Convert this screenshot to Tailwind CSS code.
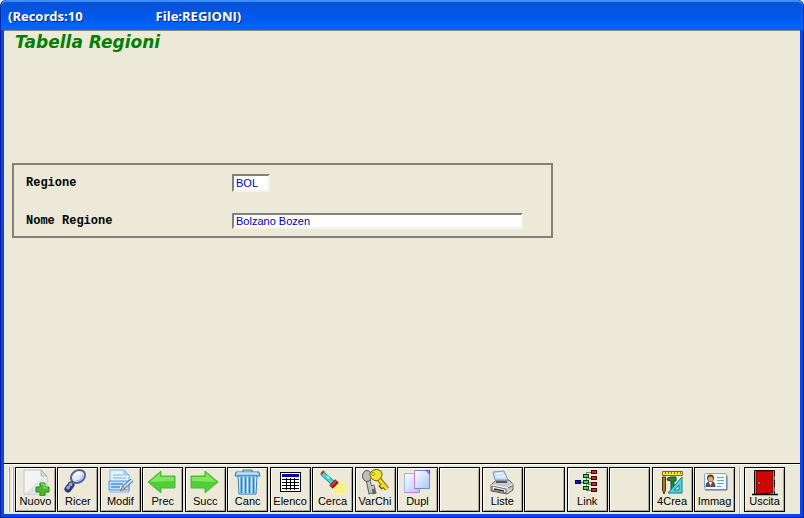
<!DOCTYPE html>
<html lang="it" class="bg-[#eef0f8]">
  <head>
    <meta charset="UTF-8" />
    <meta name="viewport" content="width=device-width, initial-scale=1.0" />
    <title>Tabella Regioni</title>
    <script src="https://cdn.jsdelivr.net/npm/@tailwindcss/browser@4"></script>
  </head>
  <body class="h-screen flex flex-col overflow-hidden font-['Liberation_Sans',sans-serif] text-black">
    <!-- Barra del titolo -->
    <header class="h-[30px] shrink-0 flex items-center gap-[73px] pl-[7px] pt-1 rounded-t-md border-x border-[#0028a8] bg-linear-to-b from-[#0a4fd0] via-[#0058ea] to-[#0066ff] font-['Open_Sans',sans-serif] text-[13px] font-bold text-white [text-shadow:1px_1px_#0a2a80] shadow-[inset_0_2px_1px_#3d8dfa]">
      <span>(Records:10</span>
      <span>File:REGIONI)</span>
    </header>

    <div class="grow flex flex-col border-x border-b border-[#001ea0]">
      <div class="grow flex flex-col border-x-3 border-b-3 border-[#0a46e4] bg-[#ece9d8]">
        <!-- Scheda -->
        <main class="grow border-t border-[#8c8a80] px-2">
          <h1 class="pl-[3px] text-[17px] leading-[22px] font-bold italic text-[#008000] font-['DejaVu_Sans',sans-serif]">Tabella Regioni</h1>

          <form class="mt-[110px] max-w-[541px] h-[75px] border-2 border-[#848278] pl-3 pr-7 pt-[9px] flex flex-col gap-5 font-['Liberation_Mono',monospace] text-[12px]">
            <div class="flex items-center h-[18px]">
              <label for="codice" class="w-[206px] font-bold">Regione</label>
              <input id="codice" type="text" value="BOL" class="w-[38px] h-[18px] bg-white border-2 border-t-[#848278] border-l-[#848278] border-r-[#f6f4ea] border-b-[#f6f4ea] pl-0.5 font-['Liberation_Sans',sans-serif] text-[11px] text-[#0000b0]" />
            </div>
            <div class="flex items-center h-[18px]">
              <label for="nome" class="w-[206px] font-bold">Nome Regione</label>
              <input id="nome" type="text" value="Bolzano Bozen" class="grow h-4 bg-white border-2 border-t-[#848278] border-l-[#848278] border-r-[#f6f4ea] border-b-[#f6f4ea] pl-0.5 font-['Liberation_Sans',sans-serif] text-[11px] text-[#0000b0]" />
            </div>
          </form>
        </main>

        <!-- Barra dei comandi -->
        <footer class="h-[51px] shrink-0 flex items-start border-t border-black pl-1 pt-[3px] text-[11px] leading-3 shadow-[inset_0_1px_#ffffff] [&_button_span]:-mt-px">
          <div class="w-[7px] h-[45px] flex gap-0.5">
            <span class="w-0.5 border-l border-r border-l-white border-r-[#aca899]"></span>
            <span class="w-0.5 border-l border-r border-l-white border-r-[#aca899]"></span>
          </div>

          <div class="w-[720px] flex justify-between">
            <button type="button" class="w-[41px] h-[45px] flex flex-col items-center border border-black shadow-[inset_1px_1px_#ffffff,inset_-1px_-1px_#aca899]">
              <svg class="w-[39px] h-7 shrink-0" viewBox="0 0 39 28">
                <path d="M8 2h17l6 6v18H8z" fill="#f3f5f5" stroke="#b4bcbc" stroke-width=".8" />
                <path d="M10 25L28 8v17z" fill="#dfe5e4" />
                <path d="M25 2v6h6z" fill="#d4dada" stroke="#999" stroke-width=".6" />
                <path d="M24 15h5v4h4v5h-4v4h-5v-4h-4v-5h4z" fill="#4fb52c" stroke="#2c8c1b" />
                <path d="M25 16h3v4h4" fill="none" stroke="#9be070" />
              </svg>
              <span>Nuovo</span>
            </button>
            <button type="button" class="w-[41px] h-[45px] flex flex-col items-center border border-black shadow-[inset_1px_1px_#ffffff,inset_-1px_-1px_#aca899]">
              <svg class="w-[39px] h-7 shrink-0" viewBox="0 0 39 28">
                <path d="M17 13l-4 4" stroke="#7078a8" stroke-width="3" />
                <path d="M13 17l-3 4" stroke="#343a78" stroke-width="7" stroke-linecap="round" />
                <path d="M13 16l-4 5" stroke="#9fabe4" stroke-width="3" stroke-linecap="round" stroke-dasharray="1 3" />
                <ellipse cx="20" cy="8.500" rx="7.500" ry="6" transform="rotate(-35 20 8.500)" fill="#dfe9fa" stroke="#5a609c" stroke-width="2" />
                <path d="M16 9q1-4 6-4" fill="none" stroke="#fff" stroke-width="2" />
                <path d="M18 13q6 0 7-6" fill="none" stroke="#9db8e8" stroke-width="1.5" />
              </svg>
              <span>Ricer</span>
            </button>
            <button type="button" class="w-[41px] h-[45px] flex flex-col items-center border border-black shadow-[inset_1px_1px_#ffffff,inset_-1px_-1px_#aca899]">
              <svg class="w-[39px] h-7 shrink-0" viewBox="0 0 39 28">
                <path d="M9 2h14l5 5v17H9z" fill="#e8f3ff" stroke="#79b2ec" />
                <path d="M23 2v5h5z" fill="#b5d8fa" stroke="#79b2ec" stroke-width=".7" />
                <path d="M12 7h10M12 10h13M12 15h13M12 18h10" stroke="#72aee8" />
                <path d="M8 13h20v9H8z" fill="#c3dffb" stroke="#4c92dc" />
                <path d="M10 16h12M10 19h9" stroke="#4a92df" stroke-width="1.5" />
                <path d="M31 12l-9 8" stroke="#4e78ac" stroke-width="4" />
                <path d="M31 12l-9 8" stroke="#d3e7fb" stroke-width="2" />
                <path d="M22 18l2 3-5 2z" fill="#e7b477" stroke="#456" stroke-width=".5" />
              </svg>
              <span>Modif</span>
            </button>
            <button type="button" class="w-[41px] h-[45px] flex flex-col items-center border border-black shadow-[inset_1px_1px_#ffffff,inset_-1px_-1px_#aca899]">
              <svg class="w-[39px] h-7 shrink-0" viewBox="0 0 39 28">
                <path d="M5 14L18 3v5h14v12H18v5z" fill="#4fce36" stroke="#4bb83c" stroke-linejoin="round" />
                <path d="M7 14L17 5v4h14v4z" fill="#7fe65e" />
              </svg>
              <span>Prec</span>
            </button>
            <button type="button" class="w-[41px] h-[45px] flex flex-col items-center border border-black shadow-[inset_1px_1px_#ffffff,inset_-1px_-1px_#aca899]">
              <svg class="w-[39px] h-7 shrink-0" viewBox="0 0 39 28">
                <path d="M32 14L19 3v5H5v12h14v5z" fill="#4fce36" stroke="#4bb83c" stroke-linejoin="round" />
                <path d="M30 14L20 5v4H6v4z" fill="#7fe65e" />
              </svg>
              <span>Succ</span>
            </button>
            <button type="button" class="w-[41px] h-[45px] flex flex-col items-center border border-black shadow-[inset_1px_1px_#ffffff,inset_-1px_-1px_#aca899]">
              <svg class="w-[39px] h-7 shrink-0" viewBox="0 0 39 28">
                <path d="M15 4V2h9v2" fill="none" stroke="#2c6ea4" />
                <path d="M8 4h23l1 4H7z" fill="#9ed0f0" stroke="#2f7fbd" />
                <path d="M10 8h19l-1 18H11z" fill="#d8effc" stroke="#2f7fbd" />
                <path d="M13.500 9v16M17.500 9v16M21.500 9v16M25.500 9v16" stroke="#2784cc" stroke-width="2" />
                <path d="M9 5h20" stroke="#e8f6ff" />
              </svg>
              <span>Canc</span>
            </button>
            <button type="button" class="w-[41px] h-[45px] flex flex-col items-center border border-black shadow-[inset_1px_1px_#ffffff,inset_-1px_-1px_#aca899]">
              <svg class="w-[39px] h-7 shrink-0" viewBox="0 0 39 28" shape-rendering="crispEdges">
                <path d="M9 4h21v20H9z" fill="#000" />
                <path d="M10 5h19v18H10z" fill="#fff" />
                <path d="M11 6h17v3H11z" fill="#0000b8" />
                <path d="M11 11.500h17M11 14.500h17M11 17.500h17M11 20.500h17M15.500 10v12M19.500 10v12M23.500 10v12" stroke="#000" />
              </svg>
              <span>Elenco</span>
            </button>
            <button type="button" class="w-[41px] h-[45px] flex flex-col items-center border border-black shadow-[inset_1px_1px_#ffffff,inset_-1px_-1px_#aca899]">
              <svg class="w-[39px] h-7 shrink-0" viewBox="0 0 39 28">
                <path d="M23 14h9v12H20v-8z" fill="#fff38a" />
                <path d="M22 17h10M22 20h10M22 23h10" stroke="#ffe23c" stroke-dasharray="1 1" />
                <path d="M9 5l11 10" stroke="#237d85" stroke-width="5" />
                <path d="M9 5l11 10" stroke="#38dce4" stroke-width="3.500" />
                <path d="M8 6l3-3" stroke="#d02020" stroke-width="2" />
                <path d="M18 19l6-6" stroke="#8e1717" stroke-width="5" />
                <path d="M18 18l5-5" stroke="#e33" stroke-width="2" />
                <path d="M14 8l2 2" stroke="#fff" stroke-width="1.500" />
              </svg>
              <span>Cerca</span>
            </button>
            <button type="button" class="w-[41px] h-[45px] flex flex-col items-center border border-black shadow-[inset_1px_1px_#ffffff,inset_-1px_-1px_#aca899]">
              <svg class="w-[39px] h-7 shrink-0" viewBox="0 0 39 28">
                <path d="M12 11l3 15M15 20l4-1M16 24l4-1" stroke="#666" stroke-width="5" />
                <path d="M12 11l3 14M15 20l3-1" stroke="#c4c4c4" stroke-width="3" />
                <ellipse cx="11" cy="8" rx="4.500" ry="5.500" fill="#bdbdbd" stroke="#555" />
                <path d="M22 10l9 11M27 17l-3 3" stroke="#706000" stroke-width="5" />
                <path d="M22 10l9 11M27 17l-2 2" stroke="#f4dd20" stroke-width="3" />
                <path d="M14 5q4-5 9-3 5 2 2 8-4 5-9 1-3-3-2-6z" fill="#f5e331" stroke="#706000" />
                <circle cx="17" cy="6" r="1.500" fill="#fff" stroke="#706000" stroke-width=".7" />
              </svg>
              <span>VarChi</span>
            </button>
            <button type="button" class="w-[41px] h-[45px] flex flex-col items-center border border-black shadow-[inset_1px_1px_#ffffff,inset_-1px_-1px_#aca899]">
              <svg class="w-[39px] h-7 shrink-0" viewBox="0 0 39 28">
                <defs>
                  <linearGradient id="foglio" x1="0" y1="0" x2="1" y2="1">
                    <stop offset="0" stop-color="#ffffff" />
                    <stop offset="1" stop-color="#a5c8ff" />
                  </linearGradient>
                </defs>
                <path d="M6.500 5.500h15v19h-15z" fill="url(#foglio)" stroke="#d678d0" />
                <path d="M6.500 24V5.500H20" fill="none" stroke="#a8b4ea" />
                <path d="M16.500 2.500h15v18h-15z" fill="url(#foglio)" stroke="#7089dc" />
                <path d="M16.500 20.500V3" stroke="#d678d0" />
                <path d="M27 2h5v5z" fill="#7045c0" />
                <path d="M29 3h2v2z" fill="#f080d0" />
              </svg>
              <span>Dupl</span>
            </button>
            <button type="button" aria-label="Libero" class="w-[41px] h-[45px] border border-black shadow-[inset_1px_1px_#ffffff,inset_-1px_-1px_#aca899]"></button>
            <button type="button" class="w-[41px] h-[45px] flex flex-col items-center border border-black shadow-[inset_1px_1px_#ffffff,inset_-1px_-1px_#aca899]">
              <svg class="w-[39px] h-7 shrink-0" viewBox="0 0 39 28">
                <path d="M8 17l5-5h13l4 4v6l-6 4-16-3z" fill="#c9c9c5" stroke="#62625e" />
                <path d="M12 12l-2-8 11-1 4 9z" fill="#c8e3ff" stroke="#6d9ad0" />
                <path d="M13 6l7-1M14 9l8-1" stroke="#fff" />
                <path d="M8 17l16 3 6-4" fill="none" stroke="#fff" />
                <path d="M9 18l14 3v4L9 22z" fill="#eeeeea" stroke="#555" stroke-width=".8" />
                <path d="M11 21l10 2M13 14h11" stroke="#333" stroke-width="1.500" />
                <path d="M25 20l4-2" stroke="#666" />
              </svg>
              <span>Liste</span>
            </button>
            <button type="button" aria-label="Libero" class="w-[41px] h-[45px] border border-black shadow-[inset_1px_1px_#ffffff,inset_-1px_-1px_#aca899]"></button>
            <button type="button" class="w-[41px] h-[45px] flex flex-col items-center border border-black shadow-[inset_1px_1px_#ffffff,inset_-1px_-1px_#aca899]">
              <svg class="w-[39px] h-7 shrink-0" viewBox="0 0 39 28" shape-rendering="crispEdges">
                <path d="M12 14.500h12M18.500 4v19M18 4.500h6M18 22.500h6M20 10.500h4M20 16.500h4" fill="none" stroke="#777f68" />
                <path d="M7 12h6v4H7z" fill="#000060" />
                <path d="M8 13h3v2H8z" fill="#1020c0" />
                <path d="M15 6h6v4h-6zM15 12h6v4h-6zM15 18h6v4h-6z" fill="#063d12" />
                <path d="M16 7h4v2h-4zM16 13h4v2h-4zM16 19h4v2h-4z" fill="#42d45b" />
                <path d="M23 2h6v4h-6zM23 8h6v4h-6zM23 14h6v4h-6zM23 20h6v4h-6z" fill="#3d0808" />
                <path d="M24 3h4v2h-4zM24 9h4v2h-4zM24 15h4v2h-4zM24 21h4v2h-4z" fill="#c52c2c" />
              </svg>
              <span>Link</span>
            </button>
            <button type="button" aria-label="Libero" class="w-[41px] h-[45px] border border-black shadow-[inset_1px_1px_#ffffff,inset_-1px_-1px_#aca899]"></button>
            <button type="button" class="w-[41px] h-[45px] flex flex-col items-center border border-black shadow-[inset_1px_1px_#ffffff,inset_-1px_-1px_#aca899]">
              <svg class="w-[39px] h-7 shrink-0" viewBox="0 0 39 28">
                <path d="M9.500 3.500h20v4h-20z" fill="#ffe83a" stroke="#7d6b00" />
                <path d="M12.500 4v2M15.500 4v2M18.500 4v2M21.500 4v2M24.500 4v2M27.500 4v2" stroke="#7d6b00" />
                <path d="M9.500 9h3v13l-1.500 4-1.500-4z" fill="#a87828" stroke="#4b3510" />
                <path d="M14 12q0-3 4-3h5v4h-2v11h-3V13z" fill="#1e8a35" stroke="#0b4d1c" />
                <path d="M29 9v16H15z" fill="#46d9df" stroke="#147b8a" stroke-linejoin="round" />
                <path d="M26 17v5h-5z" fill="#ece9d8" stroke="#147b8a" />
              </svg>
              <span>4Crea</span>
            </button>
            <button type="button" class="w-[41px] h-[45px] flex flex-col items-center border border-black shadow-[inset_1px_1px_#ffffff,inset_-1px_-1px_#aca899]">
              <svg class="w-[39px] h-7 shrink-0" viewBox="0 0 39 28">
                <rect x="9.500" y="5.500" width="22" height="16" rx="1" fill="#f4f9ff" stroke="#7fa4d8" />
                <path d="M10 22h22V8" fill="none" stroke="#5273a8" />
                <path d="M10.500 19q0-6 5-6t5 6z" fill="#5a4c48" />
                <circle cx="15.500" cy="10" r="3.500" fill="#5b3824" />
                <circle cx="15.500" cy="11" r="2.500" fill="#eda36d" />
                <path d="M14 14h3l-1.500 4z" fill="#fff" />
                <path d="M22 9.500h7M22 12.500h7M22 15.500h7M22 18.500h4" stroke="#6f9be0" />
              </svg>
              <span>Immag</span>
            </button>
          </div>

          <span class="ml-1 mr-[3px] w-0.5 h-[47px] border-l border-r border-l-[#aca899] border-r-white"></span>

          <button type="button" class="w-[41px] h-[45px] flex flex-col items-center border border-black shadow-[inset_1px_1px_#ffffff,inset_-1px_-1px_#aca899]">
            <svg class="w-[39px] h-7 shrink-0" viewBox="0 0 39 28">
              <path d="M9 2h21v25H9z" fill="#fff" />
              <path d="M9.500 27V2.500h20V27" fill="none" stroke="#000" />
              <path d="M11 3h17v22l-17 1z" fill="#cc0808" stroke="#650000" />
              <path d="M29 8h1v4h-1zM29 19h1v4h-1z" fill="#777" />
              <circle cx="14" cy="15" r="1.200" fill="#ffe83a" stroke="#000" stroke-width=".6" />
              <path d="M7 26.500h26" stroke="#000" stroke-width="1.500" />
            </svg>
            <span>Uscita</span>
          </button>
        </footer>
      </div>
    </div>
  </body>
</html>
